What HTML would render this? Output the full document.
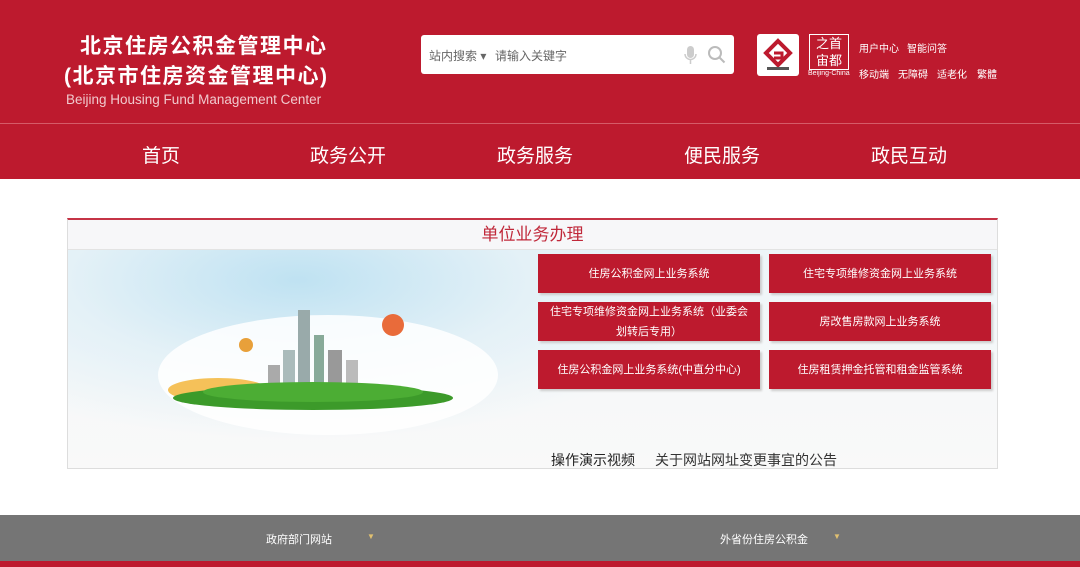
<!DOCTYPE html>
<html><head><meta charset="utf-8"><style>
*{margin:0;padding:0;box-sizing:border-box}
body{width:1080px;height:567px;overflow:hidden;background:#fff;font-family:"Liberation Sans","Noto Sans CJK SC",sans-serif;position:relative}
.hd{position:absolute;left:0;top:0;width:1080px;height:179px;background:#bd1a2e}
.line{position:absolute;left:0;top:123px;width:1080px;height:1px;background:#d55b68}
.t1,.t2{position:absolute;color:#fff;font-weight:bold;font-size:21px;letter-spacing:1.5px}
.t3{position:absolute;left:66px;top:92px;color:#f0c9cd;font-size:13.5px}
.search{position:absolute;left:421px;top:35px;width:313px;height:39px;background:#fff;border-radius:3px;font-size:12px;color:#666}
.nav{position:absolute;top:141px;color:#fff;font-size:19px}
.a{position:absolute;color:#fff;font-size:10px}
.panel{position:absolute;left:67px;top:218px;width:931px;height:251px;border:1px solid #ddd;border-top:2px solid #c53446;background:radial-gradient(ellipse 420px 160px at 230px 60px,#bfe2f2 0%,#e4f1f7 55%,rgba(246,248,249,0) 100%),linear-gradient(180deg,#eaf4f8 0%,#f6f8f9 60%,#f9f9f9 100%)}
.ph{position:absolute;left:0;top:0;width:100%;height:30px;background:#f7f7f9;border-bottom:1px solid #e3e3e3;text-align:center;color:#c0283a;font-size:17px;line-height:30px}
.b{position:absolute;width:222px;height:39px;background:#bd1a2e;color:#fff;font-size:11px;display:flex;align-items:center;justify-content:center;text-align:center;line-height:20px;box-shadow:2px 2px 2px #ccc}
.ft{position:absolute;left:0;top:515px;width:1080px;height:46px;background:#757575;color:#fff;font-size:11px}
</style></head><body>
<div class="hd">
<div class="t1" style="left:80px;top:30px">北京住房公积金管理中心</div>
<div class="t2" style="left:64px;top:60px">(北京市住房资金管理中心)</div>
<div class="t3">Beijing Housing Fund Management Center</div>
<div class="search"><span style="position:absolute;left:8px;top:12px">站内搜索 ▾</span><span style="position:absolute;left:74px;top:12px">请输入关键字</span>
<svg style="position:absolute;left:262px;top:10px" width="16" height="20"><rect x="4" y="1" width="7" height="12" rx="3.5" fill="#ccc"/><path d="M2 9a5.5 5.5 0 0 0 11 0M7.5 15v4" stroke="#ccc" fill="none" stroke-width="1.5"/></svg>
<svg style="position:absolute;left:286px;top:10px" width="20" height="20"><circle cx="8" cy="8" r="6" stroke="#bbb" stroke-width="2" fill="none"/><path d="M12.5 12.5l5 5" stroke="#bbb" stroke-width="2"/></svg></div>
<div style="position:absolute;left:757px;top:34px;width:42px;height:42px;background:#fff;border-radius:3px">
<svg width="42" height="42"><path d="M21 7l12 12-12 12-12-12z" fill="none" stroke="#bd1a2e" stroke-width="4"/><path d="M17 19h8v5h-8" fill="none" stroke="#bd1a2e" stroke-width="3"/><rect x="10" y="33" width="22" height="3" fill="#555"/></svg></div>
<div style="position:absolute;left:809px;top:34px;width:40px;height:36px;border:1px solid #fff;color:#fff;font-size:13px;line-height:17px;text-align:center">之首<br>宙都</div>
<div class="a" style="left:808px;top:70px;font-size:7px">Beijing-China</div>
<div class="a" style="left:859px;top:40px">用户中心</div><div class="a" style="left:907px;top:40px">智能问答</div>
<div class="a" style="left:859px;top:66px">移动端</div><div class="a" style="left:898px;top:66px">无障碍</div><div class="a" style="left:937px;top:66px">适老化</div><div class="a" style="left:977px;top:66px">繁體</div>
<div class="line"></div>
<div class="nav" style="left:142px">首页</div>
<div class="nav" style="left:310px">政务公开</div>
<div class="nav" style="left:497px">政务服务</div>
<div class="nav" style="left:684px">便民服务</div>
<div class="nav" style="left:871px">政民互动</div>
</div>
<div class="panel">
<div class="ph">单位业务办理</div>
<svg style="position:absolute;left:60px;top:60px" width="420" height="170">
<ellipse cx="200" cy="95" rx="170" ry="60" fill="#fff" opacity=".85"/>
<ellipse cx="90" cy="110" rx="50" ry="12" fill="#f3b230" opacity=".8"/>
<rect x="170" y="30" width="12" height="80" fill="#9aa"/><rect x="186" y="55" width="10" height="55" fill="#8a9"/><rect x="155" y="70" width="12" height="40" fill="#abb"/><rect x="200" y="70" width="14" height="40" fill="#999"/><rect x="140" y="85" width="12" height="25" fill="#aaa"/><rect x="218" y="80" width="12" height="30" fill="#bbb"/>
<ellipse cx="185" cy="118" rx="140" ry="12" fill="#3c9a2a"/>
<ellipse cx="185" cy="112" rx="110" ry="10" fill="#4cad34"/>
<circle cx="265" cy="45" r="11" fill="#e96b3a"/><circle cx="118" cy="65" r="7" fill="#e8a03a"/>
</svg>
<div class="b" style="left:470px;top:34px">住房公积金网上业务系统</div>
<div class="b" style="left:701px;top:34px">住宅专项维修资金网上业务系统</div>
<div class="b" style="left:470px;top:82px;padding:0 8px">住宅专项维修资金网上业务系统（业委会划转后专用）</div>
<div class="b" style="left:701px;top:82px">房改售房款网上业务系统</div>
<div class="b" style="left:470px;top:130px">住房公积金网上业务系统(中直分中心)</div>
<div class="b" style="left:701px;top:130px">住房租赁押金托管和租金监管系统</div>
<div style="position:absolute;left:483px;top:230px;font-size:14px;color:#222">操作演示视频</div>
<div style="position:absolute;left:587px;top:230px;font-size:14px;color:#333">关于网站网址变更事宜的公告</div>
</div>
<div class="ft"><span style="position:absolute;left:266px;top:16px">政府部门网站</span><span style="position:absolute;left:367px;top:17px;color:#e0c070;font-size:8px">▼</span>
<span style="position:absolute;left:720px;top:16px">外省份住房公积金</span><span style="position:absolute;left:833px;top:17px;color:#e0c070;font-size:8px">▼</span></div>
<div style="position:absolute;left:0;top:561px;width:1080px;height:6px;background:#bd1a2e"></div>
</body></html>
